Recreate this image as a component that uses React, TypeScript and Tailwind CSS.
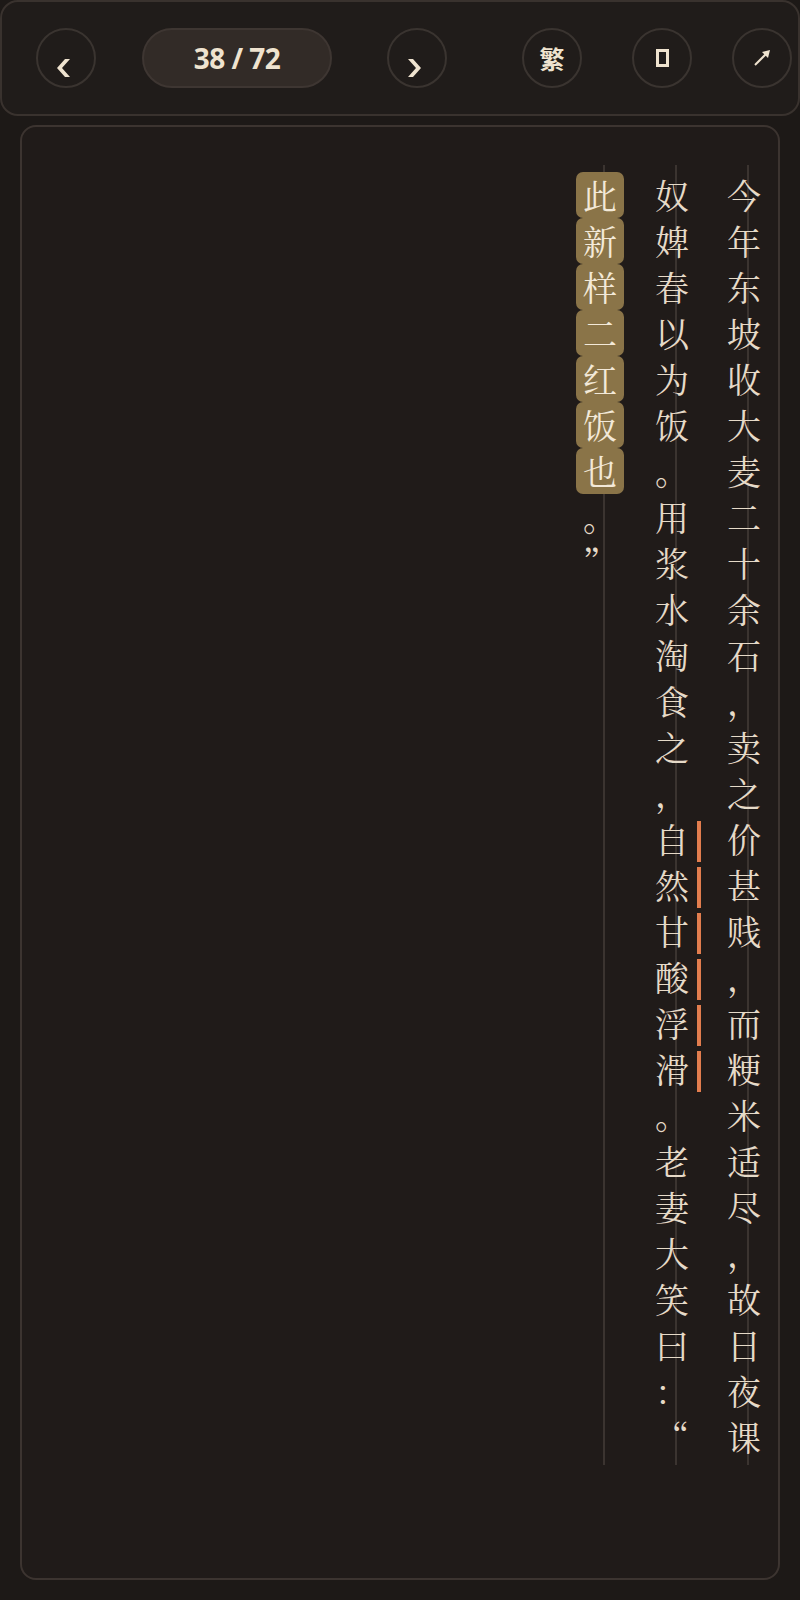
import React from "react";

const KAI = {
  fontFamily:
    '"AR PL UKai CN", "KaiTi", "STKaiti", "Noto Serif CJK SC", "Noto Sans CJK SC", serif',
};

// column text, right to left
const columns = [
  "今年东坡收大麦二十余石，卖之价甚贱，而粳米适尽，故日夜课",
  "奴婢春以为饭。用浆水淘食之，自然甘酸浮滑。老妻大笑曰：“",
  "此新样二红饭也。”",
];

// [col, index] ranges
const highlight = { col: 2, from: 0, to: 6 };
const marked = { col: 1, from: 14, to: 19 };

function CircleBtn({ children }: { children: React.ReactNode }) {
  return (
    <button className="w-[60px] h-[60px] shrink-0 rounded-full border-2 border-[#3a3430] flex items-center justify-center text-[#efe3cf]">
      {children}
    </button>
  );
}

function Chevron({ dir }: { dir: "left" | "right" }) {
  return (
    <svg width="16" height="20" viewBox="0 0 16 20" className="mt-[20px] mr-[6px]">
      <polygon
        points={dir === "left" ? "10,1 15,1 7,10 15,19 10,19 2,10" : "2,1 7,1 15,10 7,19 2,19 10,10"}
        fill="#efe3cf"
      />
    </svg>
  );
}

export default function App() {
  return (
    <div className="w-[800px] h-[1600px] bg-[#1d1917] overflow-hidden" style={{ fontFamily: '"Noto Sans", "Noto Sans CJK SC", sans-serif' }}>
      {/* Toolbar */}
      <div className="h-[116px] bg-[#201c1a] border-2 border-[#39322e] rounded-[18px] flex items-center pl-[34px]">
        <CircleBtn>
          <Chevron dir="left" />
        </CircleBtn>
        <div className="ml-[46px] w-[190px] h-[60px] rounded-full bg-[#322b27] border-2 border-[#3e3632] flex items-center justify-center">
          <span className="text-[28px] font-bold text-[#efe3cf] tracking-[-0.5px]">38 / 72</span>
        </div>
        <div className="ml-[55px]">
          <CircleBtn>
            <Chevron dir="right" />
          </CircleBtn>
        </div>
        <div className="ml-[75px]">
          <CircleBtn>
            <span className="text-[25px] font-bold leading-none" style={{ fontFamily: '"Noto Sans CJK SC", sans-serif' }}>
              繁
            </span>
          </CircleBtn>
        </div>
        <div className="ml-[50px]">
          <CircleBtn>
            <span className="block w-[13px] h-[18px] border-[3px] border-[#efe3cf]" />
          </CircleBtn>
        </div>
        <div className="ml-[40px]">
          <CircleBtn>
            <svg width="18" height="18" viewBox="0 0 18 18">
              <line x1="2" y1="16" x2="14" y2="4" stroke="#efe3cf" strokeWidth="2" />
              <polygon points="17,1 9,3 15,9" fill="#efe3cf" />
            </svg>
          </CircleBtn>
        </div>
      </div>

      {/* Reading card */}
      <div className="mt-[9px] ml-[20px] w-[760px] h-[1455px] bg-[#201b19] border-2 border-[#3c3430] rounded-[16px] pt-[38px] flex flex-row-reverse gap-[4px]">
        {columns.map((text, c) => (
          <div
            key={c}
            className="w-[68px] h-[1300px] pt-[7px] flex flex-col bg-[linear-gradient(to_right,transparent_37px,#3b3430_37px,#3b3430_39px,transparent_39px)]"
          >
            {Array.from(text).map((ch, i) => {
              const hl = c === highlight.col && i >= highlight.from && i <= highlight.to;
              const mk = c === marked.col && i >= marked.from && i <= marked.to;
              return (
                <div key={i} className="relative h-[46px] flex justify-center">
                  <span
                    className={`w-[48px] h-[46px] flex items-center justify-center text-[34px] leading-none ${
                      hl ? "bg-[#8a7448] rounded-[7px] text-[#f3e9d8]" : "text-[#e6dac8]"
                    }`}
                    style={KAI}
                  >
                    {ch}
                  </span>
                  {mk && <span className="absolute left-[59px] top-[5px] w-[4px] h-[41px] bg-[#e27d4e]" />}
                </div>
              );
            })}
          </div>
        ))}
      </div>
    </div>
  );
}
